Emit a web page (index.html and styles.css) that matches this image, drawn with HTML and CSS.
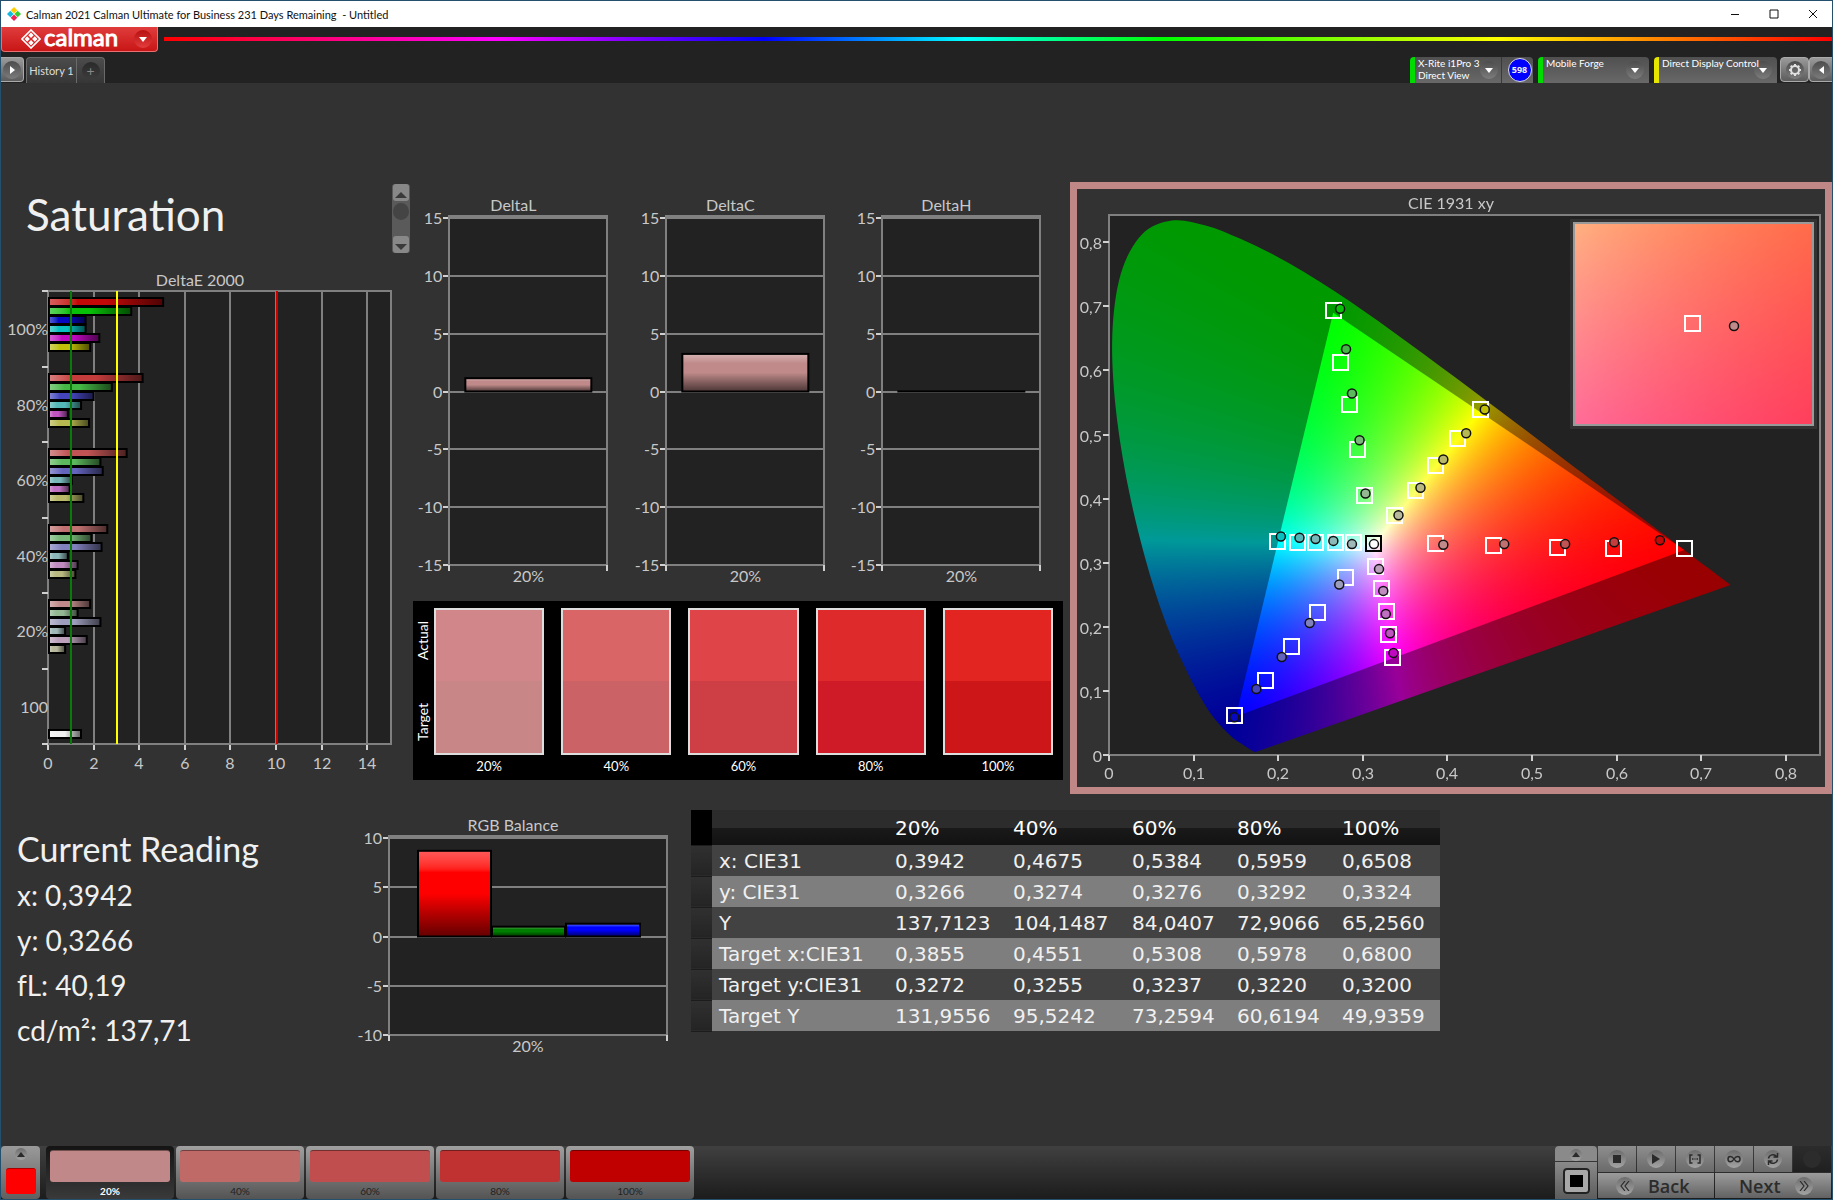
FILE: index.html
```html
<!DOCTYPE html>
<html lang="en">
<head>
    <meta charset="UTF-8">
    <meta name="viewport" content="width=device-width, initial-scale=1.0">
    <title>Calman 2021 - Untitled</title>
    <link rel="stylesheet" href="styles.css">
</head>
<body>
    <!-- window title bar -->
    <div class="titlebar">
        <svg class="app-icon" viewBox="0 0 14 14" width="14" height="14">
            <path d="M7 0l3.300 3.300L7 6.600 3.700 3.300z" fill="#fc0"/>
            <path d="M3.300 3.700L6.600 7l-3.300 3.300L0 7z" fill="#1bd"/>
            <path d="M10.700 3.700L14 7l-3.300 3.300L7.400 7z" fill="#3c3"/>
            <path d="M7 7.400l3.300 3.300L7 14l-3.300-3.300z" fill="#e25"/>
        </svg>
        <span class="titlebar-text">Calman 2021 Calman Ultimate for Business 231 Days Remaining&nbsp; - Untitled</span>
        <button class="win-btn" aria-label="Minimize"><svg width="10" height="10"><path d="M1 5.500h8"/></svg></button>
        <button class="win-btn" aria-label="Maximize"><svg width="10" height="10"><path d="M1 1h8v8h-8z"/></svg></button>
        <button class="win-btn" aria-label="Close"><svg width="10" height="10"><path d="M1 1l8 8M9 1l-8 8"/></svg></button>
    </div>

    <!-- header -->
    <header class="header">
        <div class="brand-row">
            <button class="brand">
                <svg class="brand-logo" viewBox="0 0 20 20" width="20" height="20">
                    <path d="M10 1l9 9-9 9-9-9z" fill="none" stroke="#fff" stroke-width="1.600"/>
                    <path d="M10 3.500l2.700 2.700L10 8.900 7.300 6.200zM6.200 7.300l2.700 2.700-2.700 2.700L3.500 10zM13.800 7.300l2.700 2.700-2.700 2.700-2.700-2.700zM10 11.100l2.700 2.700-2.700 2.700-2.700-2.700z" fill="#fff"/>
                </svg>
                <span class="brand-name">calman</span>
                <span class="knob knob-red"><svg width="8" height="5"><path d="M0 0h8l-4 5z"/></svg></span>
            </button>
            <div class="rainbow"></div>
        </div>
        <div class="tab-row">
            <button class="side-btn side-left" aria-label="Expand"><span class="knob"><svg width="5" height="8"><path d="M0 0l5 4-5 4z"/></svg></span></button>
            <button class="tab tab-history">History 1</button>
            <button class="tab tab-add" aria-label="Add tab"><span class="knob knob-dark">+</span></button>
            <div class="devices">
                <button class="device device-meter">
                    <span class="device-name">X-Rite i1Pro 3<br>Direct View</span>
                    <span class="knob"><svg width="8" height="5"><path d="M0 0h8l-4 5z"/></svg></span>
                </button>
                <span class="meter-count"><span class="count-badge">598</span></span>
                <button class="device device-source">
                    <span class="device-name">Mobile Forge</span>
                    <span class="knob"><svg width="8" height="5"><path d="M0 0h8l-4 5z"/></svg></span>
                </button>
                <button class="device device-display">
                    <span class="device-name">Direct Display Control</span>
                    <span class="knob"><svg width="8" height="5"><path d="M0 0h8l-4 5z"/></svg></span>
                </button>
                <button class="side-btn side-gear" aria-label="Settings"><span class="knob">
                    <svg class="gear" viewBox="-7 -7 14 14" width="14" height="14">
                        <circle r="4" />
                        <path d="M0-4v-2M0 4v2M4 0h2M-4 0h-2M2.800 2.800l1.500 1.500M-2.800 2.800l-1.500 1.500M2.800-2.800l1.500-1.500M-2.800-2.800l-1.500-1.500"/>
                    </svg>
                </span></button>
                <button class="side-btn side-right" aria-label="Collapse"><span class="knob"><svg width="5" height="8"><path d="M5 0L0 4l5 4z"/></svg></span></button>
            </div>
        </div>
    </header>

    <main class="workspace">
        <div class="row-top">
            <!-- saturation + deltaE -->
            <section class="col-left">
                <div class="page-head">
                    <h1>Saturation</h1>
                    <div class="mini-scroll">
                        <button aria-label="Scroll up"><svg width="12" height="6"><path d="M0 6l6-6 6 6z"/></svg></button>
                        <span class="mini-thumb"></span>
                        <button aria-label="Scroll down"><svg width="12" height="6"><path d="M0 0l6 6 6-6z"/></svg></button>
                    </div>
                </div>
                <svg id="deltaE" class="chart" viewBox="0 0 400 510"></svg>
            </section>

            <!-- delta charts + swatches -->
            <section class="col-mid">
                <div class="delta-row">
                    <svg id="deltaL" class="chart" viewBox="0 0 216 419"></svg>
                    <svg id="deltaC" class="chart" viewBox="0 0 216 419"></svg>
                    <svg id="deltaH" class="chart" viewBox="0 0 216 419"></svg>
                </div>
                <div class="swatches">
                    <div class="swatch-side"><span>Actual</span><span>Target</span></div>
                    <div class="swatch"><div class="patch patch-20"></div>20%</div>
                    <div class="swatch"><div class="patch patch-40"></div>40%</div>
                    <div class="swatch"><div class="patch patch-60"></div>60%</div>
                    <div class="swatch"><div class="patch patch-80"></div>80%</div>
                    <div class="swatch"><div class="patch patch-100"></div>100%</div>
                </div>
            </section>

            <!-- CIE diagram -->
            <section class="cie">
                <canvas id="cieFill" width="748" height="598"></canvas>
                <svg id="cie" class="chart cie-overlay" viewBox="0 0 748 598"></svg>
            </section>
        </div>

        <div class="row-bottom">
            <section class="reading">
                <h2>Current Reading</h2>
                <p>x: 0,3942</p>
                <p>y: 0,3266</p>
                <p>fL: 40,19</p>
                <p>cd/m²: 137,71</p>
            </section>
            <div class="rgb-wrap">
                <svg id="rgb" class="chart" viewBox="0 0 340 250"></svg>
            </div>
            <table class="data">
                <thead>
                    <tr><th class="stub"></th><th></th><th>20%</th><th>40%</th><th>60%</th><th>80%</th><th>100%</th></tr>
                </thead>
                <tbody>
                    <tr><td class="stub"></td><td>x: CIE31</td><td>0,3942</td><td>0,4675</td><td>0,5384</td><td>0,5959</td><td>0,6508</td></tr>
                    <tr><td class="stub"></td><td>y: CIE31</td><td>0,3266</td><td>0,3274</td><td>0,3276</td><td>0,3292</td><td>0,3324</td></tr>
                    <tr><td class="stub"></td><td>Y</td><td>137,7123</td><td>104,1487</td><td>84,0407</td><td>72,9066</td><td>65,2560</td></tr>
                    <tr><td class="stub"></td><td>Target x:CIE31</td><td>0,3855</td><td>0,4551</td><td>0,5308</td><td>0,5978</td><td>0,6800</td></tr>
                    <tr><td class="stub"></td><td>Target y:CIE31</td><td>0,3272</td><td>0,3255</td><td>0,3237</td><td>0,3220</td><td>0,3200</td></tr>
                    <tr><td class="stub"></td><td>Target Y</td><td>131,9556</td><td>95,5242</td><td>73,2594</td><td>60,6194</td><td>49,9359</td></tr>
                </tbody>
            </table>
        </div>
    </main>

    <!-- bottom bar -->
    <footer class="footer">
        <button class="foot-current" aria-label="Current color">
            <span class="knob knob-small"><svg width="8" height="5"><path d="M0 5l4-5 4 5z"/></svg></span>
            <span class="current-color"></span>
        </button>
        <div class="levels">
            <button class="level level-active"><span class="level-color lv-20"></span>20%</button>
            <button class="level"><span class="level-color lv-40"></span>40%</button>
            <button class="level"><span class="level-color lv-60"></span>60%</button>
            <button class="level"><span class="level-color lv-80"></span>80%</button>
            <button class="level"><span class="level-color lv-100"></span>100%</button>
        </div>
        <div class="transport">
            <div class="stop-col">
                <button class="stop-up" aria-label="More"><span class="knob knob-small"><svg width="8" height="5"><path d="M0 5l4-5 4 5z"/></svg></span></button>
                <button class="stop-big" aria-label="Stop"><span class="stop-icon"></span></button>
            </div>
            <div class="transport-main">
                <div class="transport-row">
                    <button class="tbtn" aria-label="Stop reading"><span class="knob"><svg width="8" height="8"><path d="M0 0h8v8h-8z"/></svg></span></button>
                    <button class="tbtn" aria-label="Play"><span class="knob"><svg width="8" height="10"><path d="M0 0l8 5-8 5z"/></svg></span></button>
                    <button class="tbtn" aria-label="Read series"><span class="knob"><svg class="line" width="12" height="10"><path d="M3.500 1H1v8h2.500M8.500 1H11v8H8.500M3 5h1.500M5.500 5h1M7.500 5H9"/></svg></span></button>
                    <button class="tbtn" aria-label="Continuous"><span class="knob"><svg class="line" width="14" height="8"><path d="M7 4C5 .5 1 .5 1 4s4 3.500 6 0 6-3.500 6 0-4 3.500-6 0z"/></svg></span></button>
                    <button class="tbtn" aria-label="Refresh"><span class="knob"><svg class="line" width="12" height="12"><path d="M1.500 5.500C2 2 7 0 9.500 3.500M10.500 0v4h-4M10.500 6.500C10 10 5 12 2.500 8.500M1.500 12V8h4"/></svg></span></button>
                    <button class="tbtn tbtn-off" aria-label="Unused" disabled><span class="knob knob-dark"></span></button>
                </div>
                <div class="transport-row">
                    <button class="nav-btn"><span class="knob"><svg class="line thin" width="10" height="10"><path d="M5 0L1 5l4 5M9 0L5 5l4 5"/></svg></span>Back</button>
                    <button class="nav-btn nav-next">Next<span class="knob"><svg class="line thin" width="10" height="10"><path d="M1 0l4 5-4 5M5 0l4 5-4 5"/></svg></span></button>
                </div>
            </div>
        </div>
    </footer>

    <script src="script.js"></script>
</body>
</html>
```
FILE: styles.css
```css
* {
    box-sizing: border-box;
}

body {
    margin: 0;
    min-height: 100vh;
    display: flex;
    flex-direction: column;
    background-color: #323232;
    border: 1px solid #24506e;
    color: #f0f0f0;
    font-family: Lato, "Open Sans", sans-serif;
}

button {
    margin: 0;
    padding: 0;
    border: none;
    background: none;
    color: inherit;
    font-family: inherit;
    cursor: pointer;
}

/* title bar */
.titlebar {
    display: flex;
    align-items: center;
    height: 26px;
    padding-left: 6px;
    background-color: #fff;
    color: #111;
}

.app-icon {
    margin-right: 5px;
}

.titlebar-text {
    flex: 1;
    font-size: 11px;
}

.win-btn {
    width: 39px;
    height: 25px;
}

.win-btn svg {
    fill: none;
    stroke: #111;
}

/* header */
.header {
    height: 56px;
    background-color: #222;
}

.brand-row {
    display: flex;
    height: 25px;
}

.brand {
    display: flex;
    align-items: center;
    width: 157px;
    padding: 0 5px 0 19px;
    margin-right: 6px;
    background: linear-gradient(#e03c3c, #c91616);
    border: 1px solid #e87070;
    border-top: none;
    border-radius: 0 0 4px 4px;
    color: #fff;
}

.brand-name {
    flex: 1;
    padding-bottom: 4px;
    margin-left: 3px;
    text-align: left;
    font-size: 24px;
    line-height: 20px;
    -webkit-text-stroke: 1px #fff;
}

.rainbow {
    flex: 1;
    height: 4px;
    margin-top: 10px;
    background: linear-gradient(to right, #f00, #f0f 20%, #00f 36%, #0ff 48%, #0f0 60%, #ff0 80%, #f00);
}

/* round inset behind the glyphs */
.knob {
    display: inline-flex;
    align-items: center;
    justify-content: center;
    width: 18px;
    height: 18px;
    flex: none;
    border-radius: 50%;
    background: linear-gradient(#4c4c4c, #7c7c7c);
}

.knob svg {
    fill: #fff;
}

.knob-red {
    background: linear-gradient(#b81010, #e23c3c);
}

.knob-dark {
    background: linear-gradient(#2a2a2a, #3c3c3c);
    color: #888;
    font-size: 14px;
    line-height: 14px;
}

.knob-small {
    width: 12px;
    height: 12px;
}

.tab-row {
    display: flex;
    height: 26px;
    margin-top: 5px;
}

.side-btn {
    display: flex;
    align-items: center;
    justify-content: center;
    height: 25px;
    background: linear-gradient(#9a9a9a, #5c5c5c);
    border: 1px solid #aaa;
    border-radius: 4px;
}

.side-left {
    width: 23px;
    margin-right: 2px;
    border-left: none;
    border-radius: 0 4px 4px 0;
}

.tab {
    height: 26px;
    background: linear-gradient(#4c4c4c, #363636);
    border: 1px solid #6a6a6a;
    border-bottom: none;
    color: #ddd;
    font-size: 11px;
}

.tab-history {
    width: 51px;
    border-radius: 4px 0 0 0;
}

.tab-add {
    width: 28px;
    border-left: none;
    border-radius: 0 4px 0 0;
}

.devices {
    display: flex;
    margin-left: auto;
}

.device {
    display: flex;
    align-items: center;
    justify-content: space-between;
    height: 26px;
    padding: 0 5px 0 3px;
    background: linear-gradient(#505050, #686868);
    border-left: 5px solid #00dc00;
    border-radius: 4px 4px 0 0;
    color: #fff;
    text-align: left;
    font-size: 10px;
    line-height: 12px;
}

.device-name {
    align-self: flex-start;
    white-space: nowrap;
}

.device-meter {
    width: 92px;
    padding-right: 6px;
    border-radius: 4px 0 0 0;
    border-right: 1px solid #3a3a3a;
}

.meter-count {
    display: flex;
    align-items: center;
    justify-content: center;
    width: 31px;
    padding-left: 4px;
    margin-right: 5px;
    background: linear-gradient(#505050, #686868);
    border-radius: 0 4px 0 0;
}

.count-badge {
    width: 24px;
    height: 24px;
    background-color: #00f;
    border: 1px solid #ddd;
    border-radius: 50%;
    text-align: center;
    font: bold 9px/22px "Noto Sans", sans-serif;
}

.device-source {
    width: 111px;
    margin-right: 5px;
}

.device-display {
    width: 123px;
    margin-right: 3px;
    border-left-color: #e6e600;
}

/* the long name runs over the edge of the knob */
.device-display .device-name {
    z-index: 1;
    width: 92px;
}

.device-display .knob {
    margin-right: 1px;
}

.side-gear {
    width: 29px;
}

.knob .gear {
    fill: none;
    stroke: #e0e0e0;
    stroke-width: 2;
}

.side-right {
    width: 23px;
    border-right: none;
    border-radius: 4px 0 0 4px;
}

/* workspace */
.workspace {
    flex: 1;
    padding-top: 99px;
}

.row-top {
    display: grid;
    grid-template-columns: 412px 650px 1fr;
    align-items: start;
}

.page-head {
    display: flex;
    justify-content: space-between;
    height: 88px;
    padding: 2px 3px 0 25px;
}

h1 {
    margin: 0;
    font-size: 44px;
    font-weight: normal;
    line-height: 61px;
}

.mini-scroll {
    display: flex;
    flex-direction: column;
    align-items: center;
    justify-content: space-between;
    width: 18px;
    height: 69px;
    background-color: #5a5a5a;
    border-radius: 3px;
}

.mini-scroll button {
    width: 16px;
    height: 17px;
    background-color: #888;
    border-radius: 3px;
    line-height: 10px;
}

.mini-scroll svg {
    fill: #3a3a3a;
}

.mini-thumb {
    width: 16px;
    height: 17px;
    margin-bottom: 14px;
    border-radius: 50%;
    background-color: #444;
}

/* charts */
.chart {
    display: block;
    overflow: visible;
    font-size: 16px;
}

.chart text {
    fill: #c8c8c8;
}

.plot {
    fill: #222;
}

.grid {
    stroke: #808080;
    stroke-width: 2;
    fill: none;
    shape-rendering: crispEdges;
}

.tick {
    stroke: #d0d0d0;
    stroke-width: 2;
    shape-rendering: crispEdges;
}

.bar {
    stroke: #000;
    stroke-width: 2;
}

#deltaE {
    width: 400px;
}

.delta-row {
    display: flex;
}

.delta-row .chart {
    flex: 1;
    height: 419px;
}

/* actual / target patches */
.swatches {
    display: flex;
    gap: 17px;
    height: 179px;
    padding: 7px 10px 0 0;
    background-color: #000;
    font-size: 13px;
    text-align: center;
    color: #fff;
}

.swatch-side {
    display: flex;
    flex-direction: column;
    width: 21px;
    height: 162px;
    margin: -8px -17px 0 0;
    font-size: 14px;
}

.swatch-side span {
    flex: 1;
    writing-mode: vertical-rl;
    transform: rotate(180deg);
    line-height: 20px;
}

.swatch {
    flex: 1;
}

.patch {
    height: 147px;
    margin-bottom: 3px;
    border: 2px solid #ddd;
}

.patch-20 {
    background: linear-gradient(#d18789 50%, #c88786 50%);
}

.patch-40 {
    background: linear-gradient(#da6566 50%, #cb6265 50%);
}

.patch-60 {
    background: linear-gradient(#de4448 50%, #ce3f45 50%);
}

.patch-80 {
    background: linear-gradient(#de2a2b 50%, #cf1b28 50%);
}

.patch-100 {
    background: linear-gradient(#e22520 50%, #cc1618 50%);
}

/* CIE diagram, canvas below and markers above */
.cie {
    position: relative;
    margin-left: 7px;
    border: 7px solid #bf8786;
}

.cie canvas {
    display: block;
    width: 100%;
}

.cie-overlay {
    position: absolute;
    top: 0;
    left: 0;
    width: 100%;
    height: 100%;
}

.target {
    fill: none;
    stroke: #fff;
    stroke-width: 2;
}

.target-white {
    stroke: #000;
}

.measured {
    stroke: #111;
    stroke-width: 1.5;
}

/* bottom half */
.row-bottom {
    display: flex;
    align-items: flex-start;
    margin-top: 16px;
}

.reading {
    width: 344px;
    padding: 14px 0 0 16px;
}

.reading h2,
.reading p {
    margin: 0;
    font-size: 28px;
    font-weight: normal;
    line-height: 45px;
}

.reading h2 {
    font-size: 34px;
    line-height: 49px;
}

.rgb-wrap {
    width: 346px;
    padding-top: 6px;
}

#rgb {
    width: 340px;
}

.data {
    border-collapse: collapse;
    table-layout: fixed;
    width: 749px;
    font-family: "DejaVu Sans", sans-serif;
    font-size: 20px;
}

.data th,
.data td {
    width: 98px;
    height: 31px;
    padding: 0;
    text-align: left;
    font-weight: normal;
    line-height: 30px;
}

.data th {
    height: 35px;
    background: linear-gradient(#2c2c2c 50%, #1a1a1a 50%, #121212);
    color: #fff;
}

.data th:nth-child(2),
.data td:nth-child(2) {
    width: 183px;
    padding-left: 7px;
}

.data th:nth-child(3),
.data td:nth-child(3) {
    width: 118px;
}

.data th:nth-child(4),
.data td:nth-child(4) {
    width: 119px;
}

.data th:nth-child(5),
.data td:nth-child(5),
.data th:nth-child(6),
.data td:nth-child(6) {
    width: 105px;
}

.data tbody tr {
    background-color: #424242;
}

.data tbody tr:nth-child(even) {
    background-color: #7e7e7e;
}

.data th.stub,
.data td.stub {
    width: 21px;
    background: linear-gradient(#303030, #242424);
    border-bottom: 1px solid #1c1c1c;
}

.data th.stub {
    background: #000;
}

/* footer */
.footer {
    display: flex;
    height: 53px;
    background: linear-gradient(#404040, #1c1c1c);
}

.footer .knob {
    background: linear-gradient(#6c6c6c, #a4a4a4);
}

.footer .knob svg {
    fill: #2a2a2a;
}

.foot-current {
    display: flex;
    flex-direction: column;
    align-items: center;
    justify-content: space-between;
    width: 39px;
    padding: 2px 0 5px;
    margin-right: 6px;
    background: linear-gradient(#9a9a9a, #606060);
    border-radius: 4px;
}

.current-color {
    width: 30px;
    height: 26px;
    background-color: #f00;
    border-top: 1px solid #a00;
    border-radius: 3px;
}

.levels {
    display: flex;
    gap: 2px;
}

.level {
    width: 128px;
    padding: 4px;
    background: linear-gradient(#a0a0a0, #545454);
    border-radius: 4px;
    color: #222;
    font-size: 10px;
    line-height: 12px;
}

.level-active {
    background: linear-gradient(#141414, #3a3a3a);
    color: #fff;
    font-weight: bold;
}

.level-color {
    display: block;
    height: 32px;
    margin-bottom: 3px;
    border-top: 1px solid rgba(0, 0, 0, 0.4);
    border-radius: 3px;
}

.lv-20 {
    background-color: #c08888;
}

.lv-40 {
    background-color: #c06a68;
}

.lv-60 {
    background-color: #c04e4e;
}

.lv-80 {
    background-color: #c03232;
}

.lv-100 {
    background-color: #c00000;
}

.transport {
    display: flex;
    margin-left: auto;
    margin-right: 1px;
    gap: 1px;
}

.stop-col {
    display: flex;
    flex-direction: column;
    gap: 1px;
    width: 42px;
}

.stop-up {
    height: 15px;
    background-color: #8a8a8a;
    border-radius: 4px 4px 0 0;
    line-height: 12px;
}

.stop-big {
    display: flex;
    align-items: center;
    justify-content: center;
    flex: 1;
    background: linear-gradient(#8a8a8a, #5c5c5c);
}

.stop-icon {
    width: 27px;
    height: 26px;
    background-color: #000;
    border: 7px solid #a8a8a8;
    border-radius: 4px;
    outline: 2px solid #222;
    outline-offset: -2px;
}

.transport-main {
    display: flex;
    flex-direction: column;
    gap: 1px;
}

.transport-row {
    display: flex;
    gap: 1px;
}

.tbtn {
    display: flex;
    align-items: center;
    justify-content: center;
    width: 38px;
    height: 26px;
    background: linear-gradient(#8e8e8e, #6a6a6a);
}

.tbtn-off {
    background: linear-gradient(#2c2c2c, #202020);
}

.footer .knob.knob-dark {
    background: #2c2c2c;
}

.footer .knob .line {
    fill: none;
    stroke: #2a2a2a;
    stroke-width: 1.5;
}

.footer .knob .thin {
    stroke-width: 1.2;
}

.nav-btn {
    display: flex;
    align-items: center;
    gap: 14px;
    width: 116px;
    height: 25px;
    padding-left: 18px;
    background: linear-gradient(#9c9c9c, #626262);
    color: #2c2c2c;
    font: 600 18px "Open Sans", sans-serif;
}

.nav-next {
    padding-left: 24px;
}
```
FILE: script.js
```js
// ---- svg helpers ----
const line = (x1, y1, x2, y2, cls, style = '') =>
    `<line x1="${x1}" y1="${y1}" x2="${x2}" y2="${y2}" class="${cls}" style="${style}"/>`;
const text = (x, y, str, anchor = 'middle') =>
    `<text x="${x}" y="${y}" text-anchor="${anchor}">${str}</text>`;

// shading from light to dark laid over the base color
function shade(id, color, vertical) {
    return `<linearGradient id="${id}" x2="${vertical ? 0 : 1}" y2="${vertical ? 1 : 0}">
        <stop offset="0" stop-color="color-mix(in srgb, ${color} 65%, white)"/>
        <stop offset="0.25" stop-color="${color}"/>
        <stop offset="0.5" stop-color="${color}"/>
        <stop offset="1" stop-color="color-mix(in srgb, ${color} 40%, black)"/>
    </linearGradient>`;
}

function bar(id, x, y, w, h, color, vertical) {
    return shade(id, color, vertical) +
        `<rect x="${x}" y="${y}" width="${w}" height="${h}" fill="url(#${id})" class="bar"/>`;
}

// ---- colors per hue, 100% down to 20% ----
const series = {
    red: ['#c40808', '#c43c3c', '#c05454', '#c07070', '#c08a8a'],
    green: ['#08c008', '#44b844', '#5cb85c', '#78b878', '#94b894'],
    blue: ['#0808c0', '#4444bc', '#6464bc', '#8080bc', '#9c9cbc'],
    cyan: ['#08c0c0', '#54b8b8', '#78b8b8', '#8cb8b8', '#a0b8b8'],
    magenta: ['#c008c0', '#c054c0', '#c070c0', '#c08cc0', '#bca0bc'],
    yellow: ['#c0c008', '#b8b850', '#b8b868', '#b8b880', '#b8b89c']
};

// ---- DeltaE 2000 ----
function drawDeltaE() {
    const left = 47, right = 390, top = 21, bottom = 474, unit = 22.8, step = 75.6;
    const values = [
        [5.05, 3.65, 1.65, 1.65, 2.25, 1.85],
        [4.15, 2.8, 2.0, 1.45, 0.87, 1.8],
        [3.45, 2.3, 2.4, 1.05, 0.95, 1.55],
        [2.6, 1.9, 2.35, 0.87, 1.3, 1.2],
        [1.85, 1.3, 2.3, 0.75, 1.7, 0.75]
    ];
    const labels = ['100%', '80%', '60%', '40%', '20%', '100'];
    let out = text(199, 16, 'DeltaE 2000') +
        `<rect x="${left}" y="${top}" width="${right - left}" height="${bottom - top}" class="plot"/>`;
    for (let v = 0; v <= 14; v += 2) {
        const x = Math.round(left + v * unit);
        out += line(x, top, x, bottom, 'grid') + line(x, bottom, x, bottom + 6, 'tick') + text(x, 499, v);
    }
    out += `<path d="M${left} ${top}H${right}V${bottom}H${left}z" class="grid"/>`;
    labels.forEach((label, i) => {
        out += line(left - 6, Math.round(top + i * step), left, Math.round(top + i * step), 'tick');
        out += text(47, 65 + i * step, label, 'end');
    });
    out += line(left - 6, bottom, left, bottom, 'tick');
    values.forEach((group, g) => {
        Object.keys(series).forEach((hue, i) => {
            const y = Math.round(28 + g * step + i * 9);
            out += bar(`e${g}${i}`, left + 1, y, group[i] * unit - 1, 8, series[hue][g]);
        });
    });
    out += bar('ewhite', left + 1, 460, 32, 8, '#f0f0f0');
    out += line(70, top, 70, bottom, 'grid', 'stroke:#0a7a0a');
    out += line(116, top, 116, bottom, 'grid', 'stroke:#ff0');
    out += line(276, top, 276, bottom, 'grid', 'stroke:#d00000');
    document.getElementById('deltaE').innerHTML = out;
}

// ---- vertical bar charts ----
function drawColumns(id, o) {
    const zero = (o.top + o.bottom) / 2;
    const scale = (o.bottom - o.top) / (2 * o.max);
    let out = text(o.titleX, o.top - 7, o.title) +
        `<rect x="${o.left}" y="${o.top - 2}" width="${o.right - o.left}" height="${o.bottom - o.top + 2}" class="plot"/>`;
    for (let v = o.max; v >= -o.max; v -= 5) {
        const y = Math.round(zero - v * scale);
        out += line(o.left, y, o.right, y, 'grid') + line(o.left - 6, y, o.left, y, 'tick');
        out += text(o.left - 7, y + 6, v, 'end');
    }
    out += `<path d="M${o.left} ${o.top - 2}H${o.right}V${o.bottom}H${o.left}z" class="grid"/>`;
    out += line(o.left, o.bottom, o.left, o.bottom + 6, 'tick') + line(o.right, o.bottom, o.right, o.bottom + 6, 'tick');
    o.bars.forEach((b, i) => {
        out += bar(id + i, b.x, zero - b.value * scale, b.w, b.value * scale, b.color, true);
    });
    out += text((o.left + o.right) / 2, o.bottom + 17, '20%');
    document.getElementById(id).innerHTML = out;
}

// ---- CIE 1931 ----
const locus = [
    [.1741, .005], [.1726, .0048], [.1689, .0069], [.1644, .0109],
    [.1566, .0177], [.144, .0297], [.1241, .0578], [.1096, .0868], [.0913, .1327], [.0687, .2007], [.0454, .295],
    [.0235, .4127], [.0082, .5384], [.0039, .6548], [.0139, .7502], [.0389, .812], [.0743, .8338], [.1142, .8262],
    [.1547, .8059], [.1929, .7816], [.2296, .7543], [.2658, .7243], [.3016, .6923], [.3373, .6589], [.3731, .6245],
    [.4087, .5896], [.4441, .5547], [.4788, .5202], [.5125, .4866], [.5448, .4544], [.5752, .4242], [.6029, .3965],
    [.627, .3725], [.6482, .3514], [.6658, .334], [.6801, .3197], [.6915, .3083], [.7079, .292], [.719, .2809],
    [.73, .27], [.7347, .2653]
];
const gamut = [[.265, .69], [.68, .32], [.15, .06]];
const cie = { left: 32, right: 743, top: 26, bottom: 566, ux: 846, uy: 641 };
const px = x => cie.left + x * cie.ux;
const py = y => cie.bottom - y * cie.uy;

// chromaticity to P3 rgb, scaled so the brightest channel is 255
function xyToRgb(x, y) {
    const X = x / y, Z = (1 - x - y) / y;
    const rgb = [
        2.4935 * X - 0.9314 - 0.4027 * Z,
        -0.8295 * X + 1.7627 + 0.0236 * Z,
        0.0358 * X - 0.0762 + 0.9569 * Z
    ].map(c => Math.max(0, c));
    const max = Math.max(...rgb);
    return rgb.map(c => 255 * Math.pow(c / max, 1.2));
}

// curve through the points (Catmull-Rom), straight edge back to the start
function traceCurve(ctx, points) {
    const p = points.map(([x, y]) => [px(x), py(y)]);
    ctx.beginPath();
    ctx.moveTo(...p[0]);
    for (let i = 0; i < p.length - 1; i++) {
        const a = p[i - 1] || p[i], b = p[i], c = p[i + 1], d = p[i + 2] || c;
        ctx.bezierCurveTo(
            b[0] + (c[0] - a[0]) / 6, b[1] + (c[1] - a[1]) / 6,
            c[0] - (d[0] - b[0]) / 6, c[1] - (d[1] - b[1]) / 6,
            c[0], c[1]
        );
    }
    ctx.closePath();
}

function tracePolygon(ctx, points) {
    ctx.beginPath();
    points.forEach(([x, y]) => ctx.lineTo(px(x), py(y)));
    ctx.closePath();
}

function fillArea(ctx, trace, points, level) {
    const w = 748, h = 598;
    const layer = new OffscreenCanvas(w, h);
    const img = new ImageData(w, h);
    for (let j = 0; j < h; j++) {
        for (let i = 0; i < w; i++) {
            const [r, g, b] = xyToRgb((i - cie.left) / cie.ux, Math.max(.001, (cie.bottom - j) / cie.uy));
            img.data.set([r * level, g * level, b * level, 255], (j * w + i) * 4);
        }
    }
    layer.getContext('2d').putImageData(img, 0, 0);
    ctx.save();
    trace(ctx, points);
    ctx.clip();
    ctx.drawImage(layer, 0, 0);
    ctx.restore();
}

function drawCieFill() {
    const ctx = document.getElementById('cieFill').getContext('2d');
    ctx.fillStyle = '#222';
    ctx.fillRect(cie.left, cie.top, cie.right - cie.left, cie.bottom - cie.top);
    fillArea(ctx, traceCurve, locus, 0.6);
    fillArea(ctx, tracePolygon, gamut, 1);

    // zoomed view around the 20% target
    ctx.fillStyle = '#323232';
    ctx.fillRect(493, 30, 247, 210);
    const img = ctx.createImageData(240, 202);
    for (let j = 0; j < 202; j++) {
        for (let i = 0; i < 240; i++) {
            const c = xyToRgb(.3855 + (i - 119) / 4770, .3272 - (j - 101) / 3600);
            img.data.set([...c, 255], (j * 240 + i) * 4);
        }
    }
    ctx.putImageData(img, 497, 34);
}

const targets = [
    [.265, .694], [.273, .613], [.284, .547], [.293, .477], [.301, .405],
    [.438, .54], [.411, .495], [.385, .453], [.362, .414], [.337, .374],
    [.199, .334], [.222, .332], [.243, .332], [.267, .333], [.289, .333],
    [.68, .323], [.596, .323], [.53, .324], [.454, .327], [.385, .33],
    [.335, .153], [.33, .189], [.327, .225], [.321, .26], [.315, .295],
    [.148, .062], [.184, .117], [.215, .17], [.246, .223], [.279, .278]
];
const measured = {
    green: [[.272, .696], [.279, .633], [.286, .564], [.295, .491], [.302, .408]],
    yellow: [[.443, .539], [.421, .502], [.394, .461], [.367, .417], [.341, .374]],
    cyan: [[.202, .341], [.224, .339], [.243, .337], [.264, .334], [.286, .329]],
    red: [[.65, .335], [.596, .332], [.538, .329], [.466, .329], [.394, .328]],
    magenta: [[.335, .159], [.331, .19], [.326, .22], [.323, .256], [.318, .29]],
    blue: [[.147, .059], [.173, .103], [.203, .153], [.236, .206], [.271, .266]]
};

function square(x, y, cls = 'target') {
    return `<rect x="${Math.round(x) - 7}" y="${Math.round(y) - 7}" width="15" height="15" class="${cls}"/>`;
}

function dot(x, y, color) {
    return `<circle cx="${x}" cy="${y}" r="4.5" fill="${color}" class="measured"/>`;
}

function drawCie() {
    let out = text(374, 20, 'CIE 1931 xy');
    out += `<rect x="${cie.left}" y="${cie.top}" width="${cie.right - cie.left}" height="${cie.bottom - cie.top}" class="grid"/>`;
    for (let i = 0; i <= 8; i++) {
        const label = i ? '0,' + i : '0';
        const x = Math.round(px(i / 10)), y = Math.round(py(i / 10));
        out += line(x, cie.bottom, x, cie.bottom + 6, 'tick') + text(x, 590, label);
        out += line(cie.left - 6, y, cie.left, y, 'tick') + text(25, y + 7, label, 'end');
    }
    out += targets.map(([x, y]) => square(px(x), py(y))).join('');
    for (const hue in measured) {
        measured[hue].forEach(([x, y], i) => out += dot(px(x) + 1, py(y), series[hue][i]));
    }
    out += square(px(.312), py(.33), 'target target-white') + dot(px(.312) + 1, py(.329), '#fff');
    out += '<rect x="497" y="34" width="239" height="202" class="grid" style="stroke:#999"/>';
    out += square(615, 134) + dot(657, 137, series.red[4]);
    document.getElementById('cie').innerHTML = out;
}

drawDeltaE();
const delta = { left: 36, right: 194, top: 36, bottom: 383, max: 15, titleX: 100 };
drawColumns('deltaL', { ...delta, title: 'DeltaL', bars: [{ x: 52, w: 126, value: 1.15, color: '#c08a8a' }] });
drawColumns('deltaC', { ...delta, title: 'DeltaC', bars: [{ x: 52, w: 126, value: 3.25, color: '#c08a8a' }] });
drawColumns('deltaH', { ...delta, title: 'DeltaH', bars: [{ x: 52, w: 126, value: 0.01, color: '#000000' }] });
drawColumns('rgb', {
    left: 44, right: 322, top: 22, bottom: 219, max: 10, titleX: 168, title: 'RGB Balance',
    bars: [
        { x: 73, w: 73, value: 8.7, color: '#ff0000' },
        { x: 147, w: 73, value: 1, color: '#008000' },
        { x: 221, w: 74, value: 1.3, color: '#0000ff' }
    ]
});
drawCieFill();
drawCie();
```
